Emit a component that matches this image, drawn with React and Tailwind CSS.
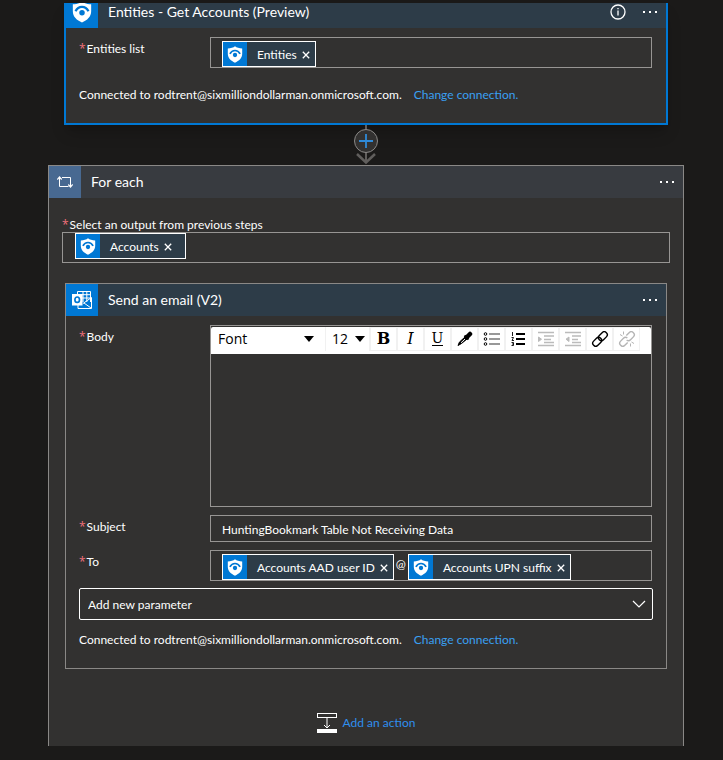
import { useState } from 'react';

const FONTS = ['Font', 'Arial', 'Calibri', 'Segoe UI', 'Tahoma'];
const SIZES = ['10', '11', '12', '14', '18'];
const PARAMETERS = ['Attachments', 'BCC', 'CC', 'From (Send as)', 'Importance'];

function ShieldIcon({ className }) {
    return (
        <svg viewBox="0 0 24 26" className={className} aria-hidden="true">
            <path d="M12 0.5C14.5 2.6 18.5 3.6 23 3.7V12C23 18.8 18.2 22.6 12 25.6C5.8 22.6 1 18.8 1 12V3.7C5.5 3.6 9.500 2.600 12 0.500Z" fill="#fff" />
            <path d="M4.200 12.200C6 8.600 8.800 6.900 12 6.900C15.200 6.900 18 8.600 19.800 12.200" fill="none" stroke="#0078d4" strokeWidth="2.600" />
            <circle cx="12" cy="13.800" r="3.300" fill="#0078d4" />
        </svg>
    );
}

function OutlookIcon() {
    return (
        <svg viewBox="0 0 22 20" className="w-[22px] h-5" fill="none" aria-hidden="true">
            <path d="M6.500 4V1.500H19.500V12M12 1.500V12M15.800 1.500V12M9 4.700H19.500M11 8H19.500" stroke="#fff" />
            <path d="M7 15V18.500H20.500V7.500L12 13.500M13 13L20 18" stroke="#fff" />
            <rect x="1" y="4" width="10.500" height="11.500" fill="#fff" />
            <ellipse cx="6.200" cy="9.700" rx="2.300" ry="2.700" stroke="#0078d4" strokeWidth="1.700" />
        </svg>
    );
}

function LoopIcon() {
    return (
        <svg viewBox="0 0 16 12" className="w-4 h-3" fill="none" stroke="#fff" aria-hidden="true">
            <path d="M2.500 1.500V10.500H11.500M5 1.500H13.500V10.500" />
            <path d="M0.300 3.500L2.500 1L4.700 3.500M11.300 8.500L13.500 11L15.700 8.500" strokeWidth="1.200" />
        </svg>
    );
}

function MoreButton() {
    return (
        <button type="button" aria-label="Menu" className="flex gap-1 py-3 pr-[9px] pl-2">
            <span className="w-[2px] h-[2px] bg-white" />
            <span className="w-[2px] h-[2px] bg-white" />
            <span className="w-[2px] h-[2px] bg-white" />
        </button>
    );
}

function Token({ children, className = '' }) {
    return (
        <span className={`flex h-[26px] shrink-0 items-stretch border border-white bg-[#2d3c48] ${className}`}>
            <span className="flex w-6 items-center justify-center bg-[#0078d4]">
                <ShieldIcon className="w-4 h-[17px]" />
            </span>
            <span className="flex items-center pl-[10px] pt-[2px]">{children}</span>
            <button type="button" aria-label={`Remove ${children}`} className="flex w-[18px] items-center justify-center pt-[2px]">
                <svg viewBox="0 0 8 8" className="w-2 h-2" stroke="#fff" strokeWidth="1.300" aria-hidden="true">
                    <path d="M0.800 0.800L7.200 7.200M7.200 0.800L0.800 7.200" />
                </svg>
            </button>
        </span>
    );
}

function Required() {
    return <span className="mr-px font-['Open_Sans',sans-serif] text-[#f1707b]">*</span>;
}

function FieldLabel({ htmlFor, children }) {
    return (
        <label htmlFor={htmlFor} className="w-[131px] shrink-0 pt-1">
            <Required />{children}
        </label>
    );
}

function Connection() {
    return (
        <p>
            Connected to rodtrent@sixmilliondollarman.onmicrosoft.com.
            <a href="#connection" className="ml-3 text-[#3aa0f3]">Change connection.</a>
        </p>
    );
}

function Caret() {
    return (
        <svg viewBox="0 0 10 6" className="pointer-events-none absolute right-1 top-[9px] w-[10px] h-[6px]" aria-hidden="true">
            <path d="M0 0H10L5 6Z" fill="#000" />
        </svg>
    );
}

function ToolButton({ label, children }) {
    return (
        <button type="button" aria-label={label} className="flex h-6 w-[27px] items-center justify-center border border-[#f1f1f1]">
            {children}
        </button>
    );
}

function ToolIcon({ children, color = '#000' }) {
    return (
        <svg viewBox="0 0 18 16" className="w-[18px] h-4" fill="none" stroke={color} aria-hidden="true">{children}</svg>
    );
}

function Toolbar() {
    const [font, setFont] = useState('Font');
    const [size, setSize] = useState('12');

    return (
        <div className="flex h-[27px] rounded-t-xs bg-white font-['Open_Sans',sans-serif] text-black">
            <div className="relative h-6 w-[115px] border-r border-[#f1f1f1]">
                <select aria-label="Font family" value={font} onChange={(e) => setFont(e.target.value)}
                        className="h-full w-full appearance-none pl-[7px] text-sm outline-none">
                    {FONTS.map(f => <option key={f}>{f}</option>)}
                </select>
                <div className="pointer-events-none absolute inset-y-0 right-[7px] w-5"><Caret /></div>
            </div>
            <div className="relative h-6 w-11 border-r border-[#f1f1f1]">
                <select aria-label="Font size" value={size} onChange={(e) => setSize(e.target.value)}
                        className="h-full w-full appearance-none pl-[6px] text-sm outline-none">
                    {SIZES.map(s => <option key={s}>{s}</option>)}
                </select>
                <Caret />
            </div>
            <ToolButton label="Bold"><span className="font-['DejaVu_Serif',serif] text-base font-bold leading-none">B</span></ToolButton>
            <ToolButton label="Italic"><span className="font-['DejaVu_Serif',serif] text-base italic leading-none">I</span></ToolButton>
            <ToolButton label="Underline"><span className="border-b border-black font-['DejaVu_Serif',serif] text-sm leading-[13px]">U</span></ToolButton>
            <ToolButton label="Text color">
                <ToolIcon>
                    <path d="M2 14.500L3.500 11L9 6L11 8L5.500 12.500L2 14.500Z" fill="#000" />
                    <path d="M8.500 4.500L12.500 8.500" strokeWidth="2" />
                    <path d="M10.500 6.500L14 3" strokeWidth="4.500" strokeLinecap="round" />
                    <path d="M5 11.800L9 8" stroke="#fff" />
                </ToolIcon>
            </ToolButton>
            <ToolButton label="Bulleted list">
                <ToolIcon color="#777">
                    <path d="M6 3H17M6 8H17M6 13H17" strokeWidth="1.400" />
                    <g stroke="#000"><circle cx="2.500" cy="3" r="1.300" /><circle cx="2.500" cy="8" r="1.300" /><circle cx="2.500" cy="13" r="1.300" /></g>
                </ToolIcon>
            </ToolButton>
            <ToolButton label="Numbered list">
                <ToolIcon>
                    <path d="M6 3H15M6 8H15M6 13H15" strokeWidth="1.800" />
                    <path d="M2.500 1V5M1.500 6.500H3.500L2 9.500H4M1.500 11.500H3.500V14.500H1.500M2 13H3.500" strokeWidth="0.900" />
                </ToolIcon>
            </ToolButton>
            <ToolButton label="Indent">
                <ToolIcon color="#bbb">
                    <path d="M1 1.500H17M7 5H17M7 8.500H14M7 11.500H17M1 14.500H17" strokeWidth="1.400" />
                    <path d="M1.500 6L4.500 8.200L1.500 10.500Z" fill="#bbb" />
                </ToolIcon>
            </ToolButton>
            <ToolButton label="Outdent">
                <ToolIcon color="#bbb">
                    <path d="M1 1.500H17M8 5H17M8 8.500H14M8 11.500H17M1 14.500H17" strokeWidth="1.400" />
                    <path d="M5 6L2 8.200L5 10.500Z" fill="#bbb" />
                </ToolIcon>
            </ToolButton>
            <ToolButton label="Add link">
                <ToolIcon>
                    <g transform="rotate(-45 9 8)" strokeWidth="1.400">
                        <rect x="0" y="5" width="10" height="6" rx="3" />
                        <rect x="8" y="5" width="10" height="6" rx="3" />
                    </g>
                </ToolIcon>
            </ToolButton>
            <ToolButton label="Remove link">
                <ToolIcon color="#b5b5b5">
                    <g transform="rotate(-45 9 8)" strokeWidth="1.400">
                        <path d="M7 11H3A3 3 0 0 1 3 5H7A3 3 0 0 1 10 7.500" />
                        <path d="M11 5H15A3 3 0 0 1 15 11H11A3 3 0 0 1 8 8.500" />
                    </g>
                    <path d="M5.500 0.500V3.500M2 3.500L4.500 5M12.500 15.500V12.500M16 12.500L13.500 11" />
                </ToolIcon>
            </ToolButton>
        </div>
    );
}

export default function App() {
    const [body, setBody] = useState('');
    const [subject, setSubject] = useState('HuntingBookmark Table Not Receiving Data');

    return (
        <main className="min-h-screen bg-[#1b1a19] pt-[3px] pb-[14px] pl-12 pr-[39px] font-['Lato','Noto_Sans',sans-serif] text-xs text-white">
            <section className="mx-4 border-2 border-t-0 border-[#0078d4] bg-[#323130] shadow-lg shadow-black/20">
                <header className="flex h-[25px] items-end overflow-hidden bg-[#2d3c48]">
                    <span className="flex h-8 w-8 shrink-0 items-center justify-center bg-[#0078d4]">
                        <ShieldIcon className="w-5 h-[22px]" />
                    </span>
                    <h2 className="flex-1 pl-[10px] text-sm leading-8">Entities - Get Accounts (Preview)</h2>
                    <button type="button" aria-label="Information" className="flex h-8 items-center px-[9px]">
                        <svg viewBox="0 0 16 16" className="w-4 h-4" fill="none" stroke="#fff" aria-hidden="true">
                            <circle cx="8" cy="8" r="7" strokeWidth="1.300" />
                            <path d="M8 6.500V11.500M8 4V5.300" strokeWidth="1.300" />
                        </svg>
                    </button>
                    <div className="flex h-8 items-center"><MoreButton /></div>
                </header>
                <div className="px-[13px] pt-[9px] pb-5">
                    <div className="flex">
                        <FieldLabel htmlFor="entities">Entities list</FieldLabel>
                        <div className="mr-px flex h-[31px] min-w-0 flex-1 items-end border border-[#979593] pl-[11px]">
                            <Token>Entities</Token>
                            <input id="entities" className="min-w-0 flex-1 outline-none" />
                        </div>
                    </div>
                    <div className="pt-[19px]"><Connection /></div>
                </div>
            </section>

            <div className="flex justify-center">
                <button type="button" aria-label="Insert a new step">
                    <svg viewBox="0 0 26 40" className="w-[26px] h-10" fill="none" aria-hidden="true">
                        <path d="M13 0V37" stroke="#605e5c" strokeWidth="2" />
                        <path d="M4 29L13 37.500L22 29" stroke="#605e5c" strokeWidth="2.500" />
                        <circle cx="13" cy="16" r="11.500" fill="#323130" stroke="#8a8886" />
                        <path d="M6 16H20M13 9V23" stroke="#2f8ad8" strokeWidth="1.800" />
                    </svg>
                </button>
            </div>

            <section className="border border-b-0 border-[#8a8886] bg-[#323130] pb-[13px]">
                <header className="flex h-8 items-center bg-[#383b40]">
                    <span className="flex h-8 w-8 items-center justify-center bg-[#486991]"><LoopIcon /></span>
                    <h2 className="flex-1 pl-[10px] text-sm">For each</h2>
                    <MoreButton />
                </header>
                <div className="px-[13px] pt-5">
                    <label htmlFor="output" className="block h-[14px] leading-[14px]">
                        <Required />Select an output from previous steps
                    </label>
                    <div className="flex h-[31px] items-start border border-[#979593] pl-3">
                        <Token className="pr-2">Accounts</Token>
                        <input id="output" className="h-full min-w-0 flex-1 outline-none" />
                    </div>
                </div>

                <section className="mx-4 mt-5 border border-[#8a8886]">
                    <header className="flex h-8 items-center bg-[#2d3c48]">
                        <span className="flex h-8 w-8 items-center justify-center bg-[#0078d4]"><OutlookIcon /></span>
                        <h2 className="flex-1 pl-[10px] text-sm">Send an email (V2)</h2>
                        <MoreButton />
                    </header>
                    <div className="px-[13px] pt-[9px] pb-5">
                        <div className="flex">
                            <FieldLabel htmlFor="body">Body</FieldLabel>
                            <div className="mr-px min-w-0 flex-1 border border-[#979593] pt-px">
                                <Toolbar />
                                <textarea id="body" value={body} onChange={(e) => setBody(e.target.value)}
                                          className="block h-38 w-full resize-none p-3 outline-none" />
                            </div>
                        </div>
                        <div className="mt-2 flex">
                            <FieldLabel htmlFor="subject">Subject</FieldLabel>
                            <input id="subject" value={subject} onChange={(e) => setSubject(e.target.value)}
                                   className="mr-px h-[27px] min-w-0 flex-1 border border-[#979593] px-[11px] pt-[2px] outline-none" />
                        </div>
                        <div className="mt-2 flex">
                            <FieldLabel htmlFor="to">To</FieldLabel>
                            <div className="mr-px flex h-[31px] min-w-0 flex-1 items-end border border-[#979593] pl-[11px]">
                                <Token>Accounts AAD user ID</Token>
                                <span className="px-[2px] pb-2">@</span>
                                <Token>Accounts UPN suffix</Token>
                                <input id="to" className="min-w-0 flex-1 outline-none" />
                            </div>
                        </div>
                        <div className="relative mt-[7px]">
                            <select aria-label="Add new parameter" defaultValue=""
                                    className="block h-8 w-full appearance-none rounded-xs border border-white px-2 pt-[2px] outline-none">
                                <option value="">Add new parameter</option>
                                {PARAMETERS.map(p => <option key={p} className="bg-[#323130]">{p}</option>)}
                            </select>
                            <svg viewBox="0 0 14 8" className="pointer-events-none absolute right-[7px] top-3 w-[14px] h-2" fill="none" stroke="#fff" strokeWidth="1.200" aria-hidden="true">
                                <path d="M1 1L7 7L13 1" />
                            </svg>
                        </div>
                        <div className="pt-3"><Connection /></div>
                    </div>
                </section>

                <div className="mt-11 flex justify-center">
                    <button type="button" className="flex items-center gap-[6px] text-[#2f8fee]">
                        <svg viewBox="0 0 20 20" className="w-5 h-5" fill="none" stroke="#fff" aria-hidden="true">
                            <rect x="0.500" y="0.500" width="19" height="4" />
                            <path d="M10 5V15M7 12L10 15L13 12" />
                            <path d="M0 18H20" strokeWidth="4" />
                        </svg>
                        Add an action
                    </button>
                </div>
            </section>
        </main>
    );
}
